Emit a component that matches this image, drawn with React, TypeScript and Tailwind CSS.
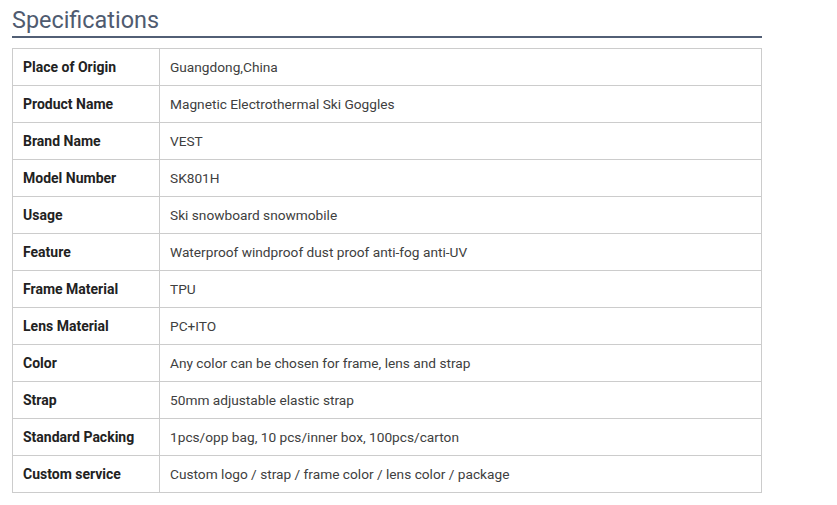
import React from 'react';

const specs: [string, string][] = [
  ['Place of Origin', 'Guangdong,China'],
  ['Product Name', 'Magnetic Electrothermal Ski Goggles'],
  ['Brand Name', 'VEST'],
  ['Model Number', 'SK801H'],
  ['Usage', 'Ski snowboard snowmobile'],
  ['Feature', 'Waterproof windproof dust proof anti-fog anti-UV'],
  ['Frame Material', 'TPU'],
  ['Lens Material', 'PC+ITO'],
  ['Color', 'Any color can be chosen for frame, lens and strap'],
  ['Strap', '50mm adjustable elastic strap'],
  ['Standard Packing', '1pcs/opp bag, 10 pcs/inner box, 100pcs/carton'],
  ['Custom service', 'Custom logo / strap / frame color / lens color / package'],
];

export default function App() {
  return (
    <div className="min-h-screen bg-white pl-[12px] pt-[6px] font-['Roboto','Liberation_Sans',sans-serif]">
      <div className="w-[750px]">
        {/* 标题 */}
        <h2 className="text-[23.4px] leading-[28px] font-normal text-[#4f5b70] pb-[2px] border-b-2 border-[#525f75]">
          Specifications
        </h2>

        {/* 参数表 */}
        <table className="mt-[10px] w-full border-collapse text-[14px]">
          <tbody>
            {specs.map(([label, value]) => (
              <tr key={label} className="h-[37px]">
                <td className="w-[147px] border border-[#cccccc] px-[10px] font-bold text-[#222222]">
                  {label}
                </td>
                <td className="border border-[#cccccc] px-[10px] text-[13.7px] text-[#404040]">{value}</td>
              </tr>
            ))}
          </tbody>
        </table>
      </div>
    </div>
  );
}
